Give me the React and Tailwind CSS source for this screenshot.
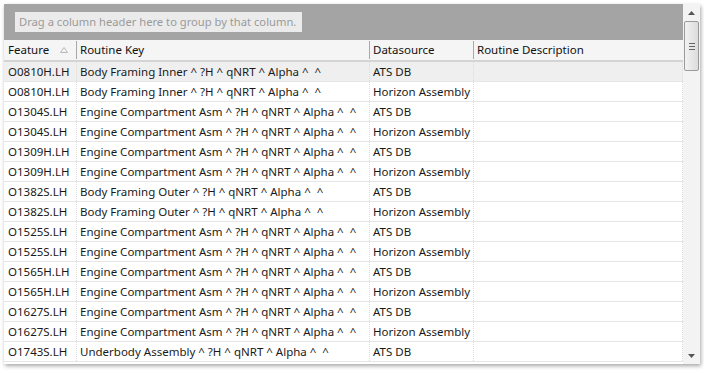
const ROWS = [
  ['O0810H.LH', 'Body Framing Inner ^ ?H ^ qNRT ^ Alpha ^  ^', 'ATS DB'],
  ['O0810H.LH', 'Body Framing Inner ^ ?H ^ qNRT ^ Alpha ^  ^', 'Horizon Assembly'],
  ['O1304S.LH', 'Engine Compartment Asm ^ ?H ^ qNRT ^ Alpha ^  ^', 'ATS DB'],
  ['O1304S.LH', 'Engine Compartment Asm ^ ?H ^ qNRT ^ Alpha ^  ^', 'Horizon Assembly'],
  ['O1309H.LH', 'Engine Compartment Asm ^ ?H ^ qNRT ^ Alpha ^  ^', 'ATS DB'],
  ['O1309H.LH', 'Engine Compartment Asm ^ ?H ^ qNRT ^ Alpha ^  ^', 'Horizon Assembly'],
  ['O1382S.LH', 'Body Framing Outer ^ ?H ^ qNRT ^ Alpha ^  ^', 'ATS DB'],
  ['O1382S.LH', 'Body Framing Outer ^ ?H ^ qNRT ^ Alpha ^  ^', 'Horizon Assembly'],
  ['O1525S.LH', 'Engine Compartment Asm ^ ?H ^ qNRT ^ Alpha ^  ^', 'ATS DB'],
  ['O1525S.LH', 'Engine Compartment Asm ^ ?H ^ qNRT ^ Alpha ^  ^', 'Horizon Assembly'],
  ['O1565H.LH', 'Engine Compartment Asm ^ ?H ^ qNRT ^ Alpha ^  ^', 'ATS DB'],
  ['O1565H.LH', 'Engine Compartment Asm ^ ?H ^ qNRT ^ Alpha ^  ^', 'Horizon Assembly'],
  ['O1627S.LH', 'Engine Compartment Asm ^ ?H ^ qNRT ^ Alpha ^  ^', 'ATS DB'],
  ['O1627S.LH', 'Engine Compartment Asm ^ ?H ^ qNRT ^ Alpha ^  ^', 'Horizon Assembly'],
  ['O1743S.LH', 'Underbody Assembly ^ ?H ^ qNRT ^ Alpha ^  ^', 'ATS DB'],
]

// column widths: Feature | Routine Key | Datasource | Routine Description
const COLS = 'grid grid-cols-[73px_293px_104px_1fr]'

export default function App() {
  return (
    <div className="w-[704px] h-[373px] bg-white p-[4px] pb-[9px] font-['Noto_Sans',sans-serif] text-[11.5px] overflow-hidden">
      <div className="flex h-full shadow-[1px_2px_4px_rgba(0,0,0,0.35)]">
        <div className="flex-1 flex flex-col min-w-0 bg-white">
          {/* group-by panel */}
          <div className="h-[36px] bg-[#a4a4a4] flex items-center pl-[11px] shrink-0">
            <div className="h-[20px] w-[287px] bg-[#ebebeb] text-[#9a9a9a] text-[11.2px] flex items-center px-[4px] leading-none whitespace-nowrap">
              Drag a column header here to group by that column.
            </div>
          </div>

          {/* header */}
          <div className={`${COLS} h-[22px] bg-[#f5f5f5] border-b-2 border-[#d4d4d4] text-[#111] shrink-0`}>
            <div className="flex items-center justify-between pl-[4px] pr-[8px] pb-[1px] border-r border-[#a8a8a8] mt-[1px] mb-[2px]">
              <span>Feature</span>
              <svg width="8" height="6" viewBox="0 0 8 6"><path d="M0.5 5.5 L4 0.5 L7.5 5.5 Z" fill="none" stroke="#b8b8b8" /></svg>
            </div>
            <div className="flex items-center pl-[3px] pb-[1px] border-r border-[#a8a8a8] mt-[1px] mb-[2px]">Routine Key</div>
            <div className="flex items-center pl-[3px] pb-[1px] border-r border-[#a8a8a8] mt-[1px] mb-[2px]">Datasource</div>
            <div className="flex items-center pl-[3px] pb-[2px]">Routine Description</div>
          </div>

          {/* rows */}
          <div className="flex-1 overflow-hidden">
            {ROWS.map((r, i) => (
              <div key={i} className={`${COLS} h-[20px] border-b border-[#e6e6e6] text-[#1a1a1a] ${i === 0 ? 'bg-[#efefef]' : 'bg-white'}`}>
                <div className="flex items-center pl-[4px] whitespace-nowrap border-r border-dotted border-[#dcdcdc]">{r[0]}</div>
                <div className="flex items-center pl-[3px] whitespace-pre overflow-hidden border-r border-dotted border-[#dcdcdc]">{r[1]}</div>
                <div className="flex items-center pl-[3px] whitespace-nowrap border-r border-dotted border-[#dcdcdc]">{r[2]}</div>
                <div className="border-r border-dotted border-[#dcdcdc]" />
              </div>
            ))}
          </div>
        </div>

        {/* scrollbar */}
        <div className="w-[17px] bg-[#f3f3f3] flex flex-col items-center shrink-0">
          <div className="h-[17px] flex items-center justify-center">
            <svg width="7" height="4" viewBox="0 0 7 4"><path d="M0 4 L3.5 0 L7 4 Z" fill="#555" /></svg>
          </div>
          <div className="w-[15px] h-[50px] rounded-[2px] border border-[#9a9a9a] bg-gradient-to-r from-[#f2f2f2] to-[#dcdcdc] flex flex-col items-center justify-center gap-[2px]">
            <div className="w-[6px] h-px bg-[#666]" />
            <div className="w-[6px] h-px bg-[#666]" />
            <div className="w-[6px] h-px bg-[#666]" />
          </div>
          <div className="flex-1" />
          <div className="h-[17px] flex items-center justify-center">
            <svg width="7" height="4" viewBox="0 0 7 4"><path d="M0 0 L3.5 4 L7 0 Z" fill="#555" /></svg>
          </div>
        </div>
      </div>
    </div>
  )
}
